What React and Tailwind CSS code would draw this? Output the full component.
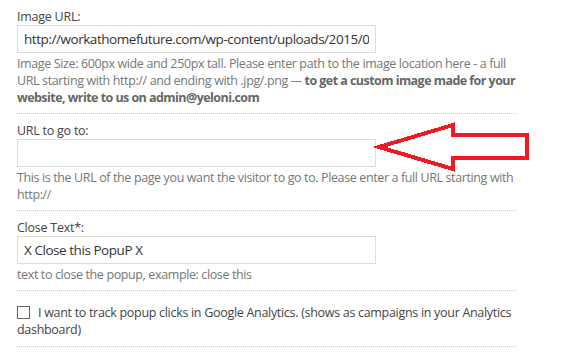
import React from 'react';

const font = { fontFamily: '"Open Sans", "Liberation Sans", sans-serif' };

const Field = ({ label, value, children }) => (
  <div className="pt-[8px] pb-[7px] border-b border-dotted border-[#c8c8c8]">
    <label className="block text-[12.5px] tracking-[-0.25px] leading-[17px] text-[#444]">{label}</label>
    <input
      type="text"
      readOnly
      value={value}
      className="block w-[359px] h-[28px] px-[6px] border border-[#ddd] bg-white text-[13.5px] tracking-[-0.45px] text-[#333] outline-none"
    />
    <div className="mt-[2px] text-[12.5px] tracking-[-0.38px] leading-[17px] text-[#777]">{children}</div>
  </div>
);

const Arrow = () => (
  <svg
    className="absolute left-[370px] top-[118px]"
    width="165"
    height="60"
    viewBox="370 118 165 60"
    shapeRendering="crispEdges"
  >
    <polygon
      points="379,147 453,125 453,135 527,135 527,158 453,158 453,169"
      fill="none"
      stroke="#ed1c24"
      strokeWidth="4"
      strokeLinejoin="miter"
    />
  </svg>
);

export default function App() {
  return (
    <div className="relative bg-white w-[569px] h-[362px] overflow-hidden" style={font}>
      <div className="w-[499px] ml-[17px]">
        <Field label="Image URL:" value="http://workathomefuture.com/wp-content/uploads/2015/08/popup.jpg">
          Image Size: 600px wide and 250px tall. Please enter path to the image location here - a full URL
          starting with http:// and ending with .jpg/.png ---{' '}
          <b className="font-bold tracking-[-0.55px] text-[#666]">to get a custom image made for your website, write to us on admin@yeloni.com</b>
        </Field>
        <Field label="URL to go to:" value="">
          This is the URL of the page you want the visitor to go to. Please enter a full URL starting with http://
        </Field>
        <Field label="Close Text*:" value="X Close this PopuP X">
          text to close the popup, example: close this
        </Field>
        <div className="pt-[13px] pb-[8px] border-b border-dotted border-[#c8c8c8] text-[12.5px] tracking-[-0.3px] leading-[17px] text-[#444]">
          <span className="inline-block align-[-2px] w-[13px] h-[13px] border border-[#666] bg-white mr-[8px]" />
          I want to track popup clicks in Google Analytics. (shows as campaigns in your Analytics dashboard)
        </div>
      </div>
      <Arrow />
    </div>
  );
}
